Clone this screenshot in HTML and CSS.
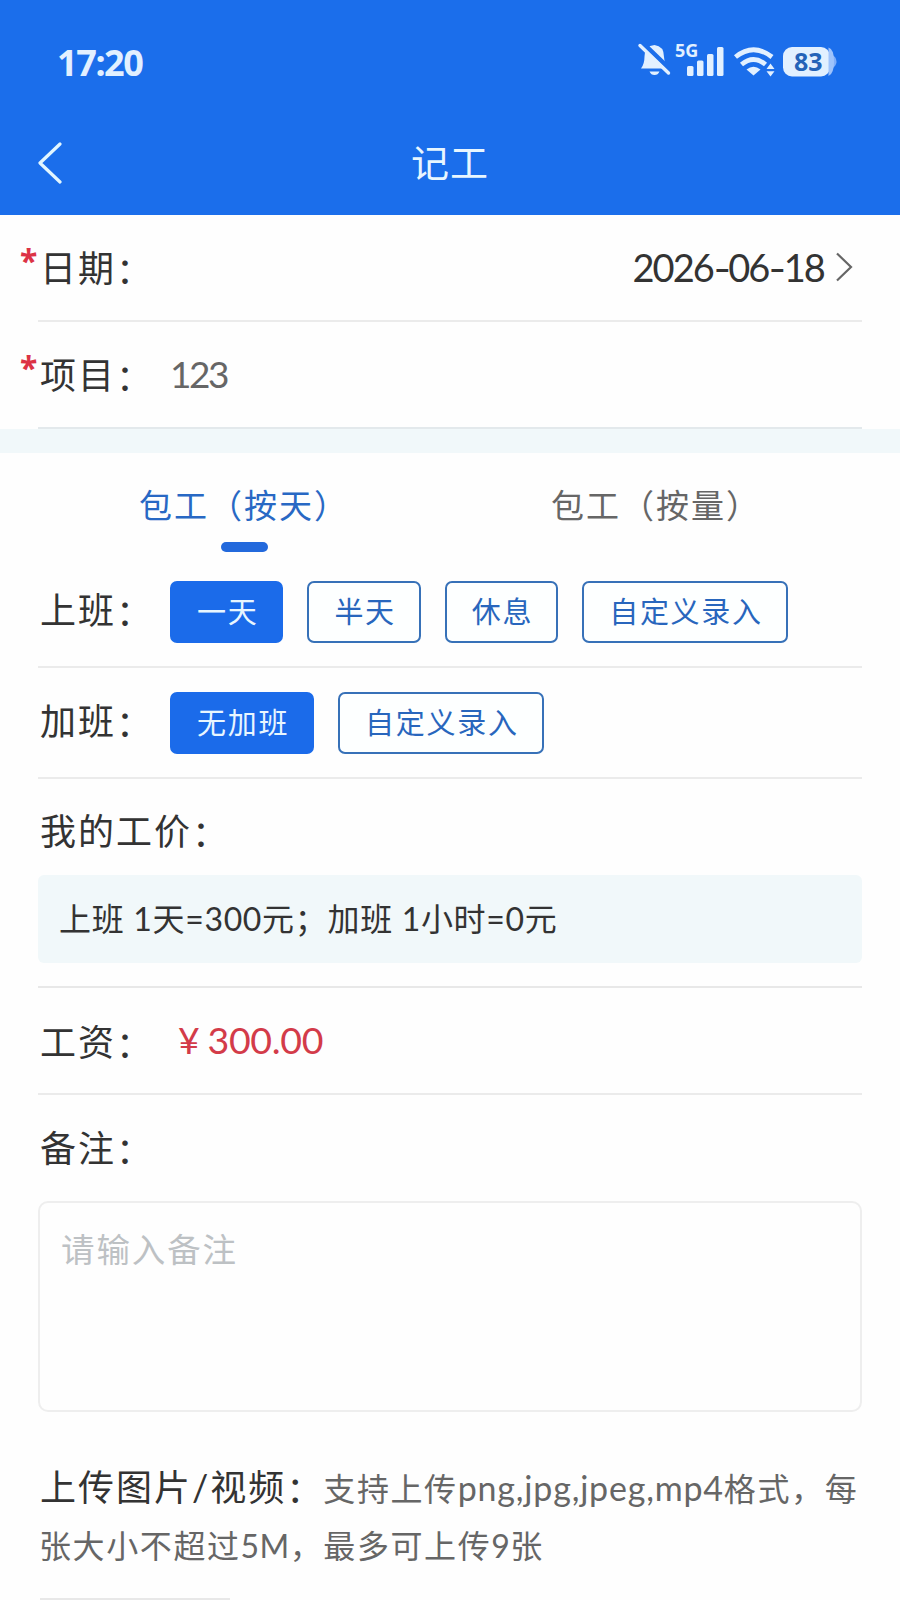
FILE: index.html
```html
<!DOCTYPE html>
<html lang="zh-CN">
<head>
<meta charset="utf-8">
<title>记工</title>
<link rel="stylesheet" href="styles.css">
</head>
<body>
<header class="header">
  <div class="status">
    <span class="time">17:20</span>
    <svg class="status-icons" width="204" height="40" viewBox="0 0 204 40">
      <g fill="#e2f0ff">
        <path d="M5 28.500Q8.500 24 8.500 16.500Q8.500 6 18.500 5Q28 6 28 17Q28.500 24 32 28.500Z"/>
        <path d="M13.500 31.500H23.500Q22 35 18.500 35Q15 35 13.500 31.500Z"/>
        <path d="M6 2.500L35 30.500" stroke="#1b6eeb" stroke-width="5"/>
        <path d="M4 5.500L32.500 33" stroke="#e2f0ff" stroke-width="3.400" stroke-linecap="round"/>
        <rect x="51" y="26" width="6.500" height="10" rx="1.500"/>
        <rect x="61" y="20.500" width="6.500" height="15.500" rx="1.500"/>
        <rect x="71" y="14" width="6.500" height="22" rx="1.500"/>
        <rect x="81" y="7" width="6.500" height="29" rx="1.500"/>
        <path d="M117.500 35.500L110.500 29.500Q117.500 24 124.500 29.500Z"/>
        <path d="M130.500 29L134.500 23.500L138.500 29ZM130.500 31.300H138.500L134.500 36.500Z"/>
      </g>
      <g fill="none" stroke="#e2f0ff" stroke-width="4.800">
        <path d="M99.500 17Q117.500 2.500 136 17"/>
        <path d="M105.500 24.500Q117.500 14.500 129.500 24.500"/>
      </g>
      <path d="M190 11Q195 14 199 17Q202 21.500 199 26Q195 30 190 33Z" fill="#80aefa"/>
      <rect x="147" y="7" width="47" height="29.500" rx="9" fill="#e2f0ff"/>
      <path d="M192.500 7.500Q198 9 198 21.500Q198 34 192.500 36Z" fill="#9fc3fb"/>
      <text class="net" x="39" y="17">5G</text>
      <text class="battery" x="158" y="31">83</text>
    </svg>
  </div>
  <div class="nav">
    <svg class="back" width="26" height="42" viewBox="0 0 26 42"><path d="M23 2L3 21L23 40" fill="none" stroke="#e2f6ff" stroke-width="3.200" stroke-linecap="round" stroke-linejoin="round"/></svg>
    <h1 class="title">记工</h1>
  </div>
</header>
<main>
  <section class="basic">
    <div class="row"><span class="required">*</span><span class="label">日期<span class="colon">：</span></span><span class="date">2026<span class="dash">-</span>06<span class="dash">-</span>18</span>
      <svg class="chevron" width="18" height="32" viewBox="0 0 18 32"><path d="M2 2.500L16 16L2 29.500" fill="none" stroke="#666" stroke-width="2.200"/></svg>
    </div>
    <div class="row last"><span class="required">*</span><span class="label">项目<span class="colon">：</span></span><span class="project">123</span></div>
  </section>
  <div class="band"></div>
  <nav class="tabs">
    <div class="tab active"><span>包工<span class="open">（</span>按天<span class="close">）</span></span></div>
    <div class="tab"><span>包工<span class="open">（</span>按量<span class="close">）</span></span></div>
  </nav>
  <div class="row shift"><span class="label">上班<span class="colon">：</span></span>
    <div class="options"><button class="option selected">一天</button><button class="option">半天</button><button class="option">休息</button><button class="option">自定义录入</button></div>
  </div>
  <div class="row overtime"><span class="label">加班<span class="colon">：</span></span>
    <div class="options"><button class="option selected">无加班</button><button class="option">自定义录入</button></div>
  </div>
  <section class="price">
    <div class="label">我的工价<span class="colon">：</span></div>
    <div class="formula">上班 1天=300元；加班 1小时=0元</div>
  </section>
  <div class="row wage"><span class="label">工资<span class="colon">：</span></span><span class="amount"><span class="yen">¥</span>300.00</span></div>
  <section class="remark">
    <div class="label">备注<span class="colon">：</span></div>
    <div class="input">请输入备注</div>
  </section>
  <section class="upload">
    <p class="hint"><span class="label">上传图片/视频<span class="colon">：</span></span>支持上传<span class="formats">png,jpg,jpeg,mp4</span>格式，每<br>张大小不超过<span class="limit">5M</span>，最多可上传<span class="limit">9</span>张</p>
    <div class="thumb"></div>
  </section>
</main>
</body>
</html>
```

FILE: styles.css
```css
* { box-sizing: border-box; }
body {
  margin: 0;
  width: 900px;
  height: 1600px;
  overflow: hidden;
  background: #fefefe;
  color: #333;
  font-family: Lato, "Noto Sans CJK SC", sans-serif;
}
.header { height: 214.500px; background: #1b6eeb; color: #e8f6ff; }
.status {
  display: flex;
  justify-content: space-between;
  height: 112px;
  padding: 40px 60px 0 57px;
}
.status-icons { overflow: visible; }
.time { font: 700 36px/46px "Noto Sans", sans-serif; letter-spacing: -1.400px; color: #e2f0ff; }
.net { font: 700 18px "Noto Sans", sans-serif; fill: #e2f0ff; }
.battery { font: 700 25px "Noto Sans", sans-serif; fill: #2463b8; }
.nav { display: grid; grid-template-columns: 86px 1fr 86px; align-items: center; height: 102px; }
.back { margin-left: 37px; }
.title { margin: 0; padding-bottom: 2px; text-align: center; font-size: 38px; font-weight: 400; line-height: 50px; letter-spacing: 1px; }
.row {
  display: flex;
  align-items: center;
  margin: 0 38px;
  height: 107px;
  border-bottom: 2px solid #ebebeb;
}
.last { height: 107.500px; border-color: #e3e9ec; }
.label { color: #333; font-size: 36px; line-height: 50px; letter-spacing: 2px; white-space: nowrap; }
.row > .label { width: 132px; padding: 2px 0 0 2px; }
.colon { line-height: 1; vertical-align: -2px; }
.required { width: 18px; margin-left: -18px; padding: 0 0 12px 0; color: #dc3345; font: 700 32px/42px "Noto Sans", sans-serif; }
.date { margin-left: auto; padding-bottom: 1px; font-size: 38px; letter-spacing: -1.900px; }
.dash { display: inline-block; margin: 0 1.500px; transform: scaleX(1.25); }
.chevron { margin: 0 9px 0 11px; }
.project { padding-bottom: 2px; color: #666; font-size: 37px; letter-spacing: -2.500px; }
.band { height: 24px; background: #f1f8fa; }
.tabs { display: flex; height: 108px; padding: 27px 38px 0; }
.tab {
  flex: 1;
  display: flex;
  flex-direction: column;
  align-items: center;
  color: #666;
  font-size: 33px;
  line-height: 50px;
  letter-spacing: 2px;
}
.tab.active { color: #2868c4; }
.tab.active::after { content: ""; width: 47px; height: 10px; margin-top: 12px; border-radius: 5px; background: #2369dc; }
.shift { height: 107px; }
.shift > .label { padding: 0 0 7px 2px; }
.overtime > .label { padding: 0 0 3px 2px; }
.shift .options { padding-bottom: 5px; }
.overtime { height: 111px; }
.options { display: flex; gap: 24px; padding-top: 1px; }
.option {
  height: 62px;
  padding: 0 23px 1px 25px;
  border: 2px solid #3771b8;
  border-radius: 7px;
  background: #fdffff;
  color: #2866bd;
  font: 400 29px/57px Lato, "Noto Sans CJK SC", sans-serif;
  letter-spacing: 1.700px;
}
.selected { background: #1b6bea; border-color: #1b6bea; color: #e8f6ff; }
.price { margin: 0 38px; padding: 27px 0 23px; border-bottom: 2px solid #e8e8e8; }
.price > .label, .remark > .label { height: 50px; padding-left: 2px; }
.formula {
  height: 88px;
  margin-top: 19px;
  padding: 0 21px;
  border-radius: 6px;
  background: #f1f8fa;
  color: #333;
  font-size: 32px;
  line-height: 87px;
  letter-spacing: 0.680px;
}
.amount { padding: 0 0 2px 8px; color: #d33b49; font-size: 37.500px; letter-spacing: -0.300px; }
.yen { margin-right: 8px; }
.remark { margin: 0 38px; padding-top: 28px; }
.input {
  height: 211px;
  margin-top: 28px;
  padding: 20px 21px;
  border: 2px solid #eee;
  border-radius: 10px;
  color: #bdc1c4;
  font-size: 33.500px;
  line-height: 52px;
  letter-spacing: 1.900px;
}
.upload { margin: 0 39px; padding-top: 47px; }
.hint { height: 116px; margin: 0; color: #666; font-size: 32px; line-height: 57px; letter-spacing: 1.600px; white-space: nowrap; }
.hint .label { padding-left: 1px; }
.hint .label .colon { margin-right: -1px; }
.formats { font-size: 34px; letter-spacing: 0.800px; }
.limit { letter-spacing: 0.400px; }
.thumb { width: 190px; height: 40px; margin: 23px 0 0 1px; background: #e8e8e8; }
```
